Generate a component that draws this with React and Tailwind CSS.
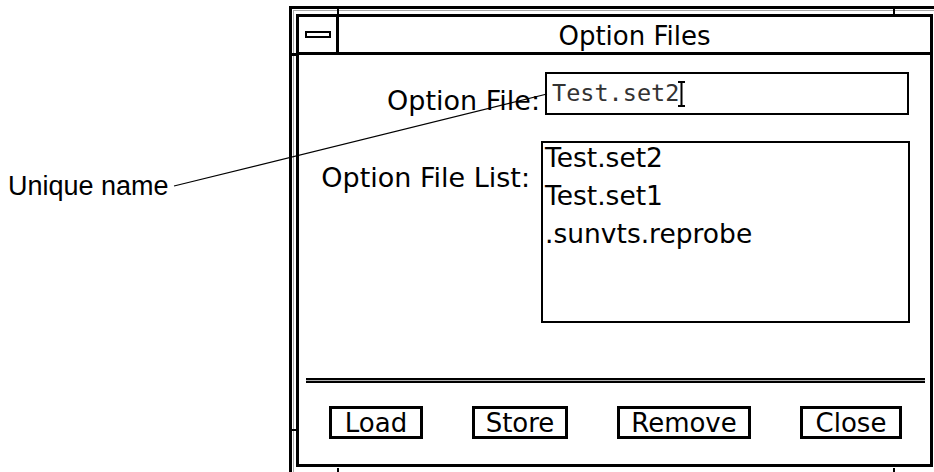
import React from "react";

const ui = { fontFamily: '"DejaVu Sans", "Noto Sans", sans-serif' };
const mono = { fontFamily: '"DejaVu Sans Mono", "Liberation Mono", monospace' };
const arial = { fontFamily: '"Liberation Sans", Arial, sans-serif' };

function Btn({ w, children }) {
  return (
    <div
      className={`flex h-[33px] items-center justify-center border-[3px] border-black bg-white text-[26px] leading-none text-black ${w}`}
      style={ui}
    >
      {children}
    </div>
  );
}

export default function App() {
  return (
    <div className="relative h-[472px] w-[934px] overflow-hidden bg-white">
      <div className="flex pl-[289px] pt-[6px]">
        {/* outer resize frame */}
        <div className="relative h-[480px] w-[660px] border-l-[3px] border-t-[3px] border-black pl-px pt-px">
          {/* corner ticks */}
          <div className="absolute left-[45px] top-0 h-[6px] w-[2px] bg-black" />
          <div className="absolute left-[601px] top-0 h-[6px] w-[2px] bg-black" />
          <div className="absolute left-[45px] top-[459px] h-[10px] w-[2px] bg-black" />
          <div className="absolute left-[601px] top-[459px] h-[10px] w-[2px] bg-black" />
          <div className="absolute left-0 top-[44px] h-[3px] w-[6px] bg-black" />
          <div className="absolute left-0 top-[420px] h-[2px] w-[6px] bg-black" />

          <div className="h-full border-l border-t border-[#a8a8a8] pl-[2px] pt-[3px]">
            {/* window */}
            <div className="flex h-[453px] w-[637px] flex-col border-[3px] border-black bg-white">
              {/* title bar */}
              <div className="flex h-[38px] shrink-0 border-b-[3px] border-black">
                <div className="flex w-[40px] items-center justify-center border-r-[3px] border-black">
                  <div className="h-[7px] w-[26px] border-2 border-black" />
                </div>
                <div
                  className="flex flex-1 items-center justify-center pt-[3px] text-[26px] leading-none text-black"
                  style={ui}
                >
                  Option Files
                </div>
              </div>

              {/* body */}
              <div className="flex flex-1 flex-col">
                {/* Option File row */}
                <div className="mt-[17px] flex items-start">
                  <div
                    className="mt-[15px] w-[241px] text-right text-[27px] leading-none text-black"
                    style={ui}
                  >
                    Option File:
                  </div>
                  <div className="ml-[5px] flex h-[43px] w-[364px] items-center border-2 border-black pl-[5px]">
                    <span className="text-[23.5px] leading-none text-[#333]" style={mono}>
                      Test.set2
                    </span>
                    <svg width="9" height="26" viewBox="0 0 9 26" className="-ml-[2px]">
                      <path d="M1 1h7M4.5 1v24M1 25h7" stroke="black" strokeWidth="2" fill="none" />
                    </svg>
                  </div>
                </div>

                {/* Option File List row */}
                <div className="mt-[26px] flex items-start">
                  <div
                    className="mt-[23px] w-[231px] text-right text-[27px] leading-none text-black"
                    style={ui}
                  >
                    Option File List:
                  </div>
                  <div
                    className="ml-[11px] flex h-[182px] w-[369px] flex-col border-2 border-black pl-[2px] text-[26.5px] leading-[38px] text-black"
                    style={ui}
                  >
                    <div className="-mt-[4px]">Test.set2</div>
                    <div>Test.set1</div>
                    <div>.sunvts.reprobe</div>
                  </div>
                </div>

                {/* separator */}
                <div className="ml-[7px] mr-[5px] mt-[55px] h-[5px] border-y-2 border-black bg-[#b0b0b0]" />

                {/* buttons */}
                <div className="mt-[23px] flex gap-[49px] pl-[30px]">
                  <Btn w="w-[94px]">Load</Btn>
                  <Btn w="w-[96px]">Store</Btn>
                  <Btn w="w-[134px]">Remove</Btn>
                  <Btn w="w-[102px]">Close</Btn>
                </div>
              </div>
            </div>
          </div>
        </div>
      </div>

      {/* annotation callout */}
      <div
        className="absolute left-[8px] top-[171px] text-[27px] leading-[30px] text-black"
        style={arial}
      >
        Unique name
      </div>
      <svg className="pointer-events-none absolute left-0 top-0" width="934" height="472">
        <line x1="174" y1="186" x2="547" y2="94" stroke="black" strokeWidth="1.2" />
      </svg>
    </div>
  );
}
